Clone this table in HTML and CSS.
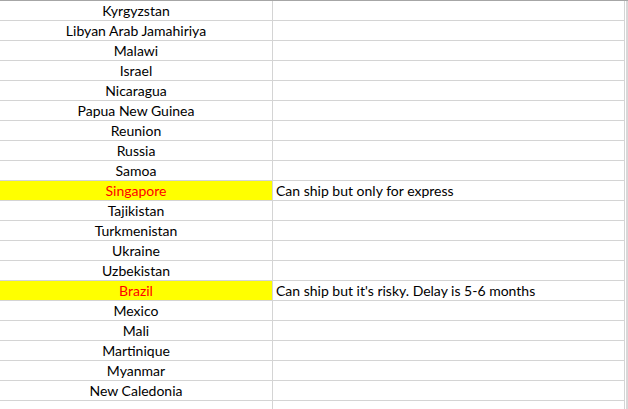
FILE: index.html
```html
<!DOCTYPE html>
<html>
<head>
<meta charset="utf-8">
<link rel="stylesheet" href="styles.css">
</head>
<body>
<div class="sheet">
  <div class="row"><div class="a">Kyrgyzstan</div><div class="b"></div></div>
  <div class="row"><div class="a">Libyan Arab Jamahiriya</div><div class="b"></div></div>
  <div class="row"><div class="a">Malawi</div><div class="b"></div></div>
  <div class="row"><div class="a">Israel</div><div class="b"></div></div>
  <div class="row"><div class="a">Nicaragua</div><div class="b"></div></div>
  <div class="row"><div class="a">Papua New Guinea</div><div class="b"></div></div>
  <div class="row"><div class="a">Reunion</div><div class="b"></div></div>
  <div class="row"><div class="a">Russia</div><div class="b"></div></div>
  <div class="row"><div class="a">Samoa</div><div class="b"></div></div>
  <div class="row"><div class="a hl">Singapore</div><div class="b">Can ship but only for express</div></div>
  <div class="row"><div class="a">Tajikistan</div><div class="b"></div></div>
  <div class="row"><div class="a">Turkmenistan</div><div class="b"></div></div>
  <div class="row"><div class="a">Ukraine</div><div class="b"></div></div>
  <div class="row"><div class="a">Uzbekistan</div><div class="b"></div></div>
  <div class="row"><div class="a hl">Brazil</div><div class="b">Can ship but it's risky. Delay is 5-6 months</div></div>
  <div class="row"><div class="a">Mexico</div><div class="b"></div></div>
  <div class="row"><div class="a">Mali</div><div class="b"></div></div>
  <div class="row"><div class="a">Martinique</div><div class="b"></div></div>
  <div class="row"><div class="a">Myanmar</div><div class="b"></div></div>
  <div class="row"><div class="a">New Caledonia</div><div class="b"></div></div>
  <div class="row"><div class="a"></div><div class="b"></div></div>
</div>
</body>
</html>
```

FILE: styles.css
```css
html, body {
  margin: 0;
  padding: 0;
  background: #ffffff;
  overflow: hidden;
}
.sheet {
  width: 628px;
  height: 409px;
  border-top: 1px solid #a6a6a6;
  box-sizing: border-box;
  font-family: Lato, "Open Sans", sans-serif;
  font-size: 14px;
  color: #000000;
  background: linear-gradient(to right, transparent 626px, #d8d8d8 626px);
}
.row {
  display: grid;
  grid-template-columns: 273px 352px;
  height: 20px;
}
.a, .b {
  box-sizing: border-box;
  height: 20px;
  line-height: 19px;
  border-bottom: 1px solid #d4d4d4;
  border-right: 1px solid #d4d4d4;
  white-space: nowrap;
  overflow: visible;
}
.a {
  text-align: center;
}
.b {
  padding-left: 3px;
}
.hl {
  background: #ffff00;
  color: #ff0000;
  background-clip: padding-box;
}
```
